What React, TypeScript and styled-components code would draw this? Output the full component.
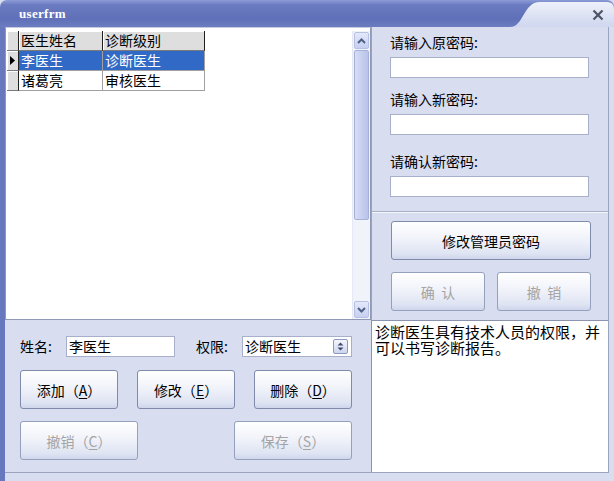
import React from 'react';
import styled, { createGlobalStyle } from 'styled-components';

const GlobalStyle = createGlobalStyle`
  html, body {
    margin: 0;
    padding: 0;
    background: #ffffff;
  }
  body {
    font-family: "Noto Sans CJK SC", "Liberation Sans", sans-serif;
    font-size: 14px;
    color: #000;
  }
`;

const Window = styled.div`
  width: 614px;
  height: 481px;
  display: flex;
  flex-direction: column;
  background: #d8ddf0;
  overflow: hidden;
`;

const TitleBar = styled.div`
  position: relative;
  height: 27px;
  flex-shrink: 0;
  display: flex;
  align-items: center;
  padding-left: 19px;
  border-radius: 7px 7px 0 0;
  background: linear-gradient(#8d9cd6 0%, #6a7bc1 18%, #5f70b8 70%, #6c7cc0 100%);
`;

const Title = styled.span`
  position: relative;
  z-index: 1;
  color: #ffffff;
  font-family: "Liberation Serif", serif;
  font-weight: bold;
  font-size: 13px;
  letter-spacing: 0.3px;
`;

const Swoop = styled.svg`
  position: absolute;
  right: 0;
  top: 0;
`;

const CloseIcon = styled.svg`
  position: absolute;
  right: 10px;
  top: 9px;
`;

const Frame = styled.div`
  flex: 1;
  display: flex;
  border-left: 5px solid #6878be;
  padding: 0 5px 8px 0;
`;

const Client = styled.div`
  flex: 1;
  display: grid;
  grid-template-columns: 366px 1fr;
  grid-template-rows: 293px 1fr;
  border-right: 1px solid #9aa2bd;
  border-bottom: 1px solid #9aa2bd;
`;

const GridPanel = styled.div`
  display: flex;
  background: #ffffff;
  border: 1px solid #8f98b6;
  border-top-color: #c4cae0;
  padding: 3px 0 0 1px;
`;

const Table = styled.div`
  flex: 1;
  display: grid;
  grid-template-columns: 12px 84px 102px;
  grid-auto-rows: 20px;
  align-content: start;
`;

const HeadCell = styled.div`
  background: #dedede;
  border-right: 1px solid #202020;
  border-bottom: 1px solid #7a7a7a;
  box-shadow: inset 1px 1px 0 #ffffff;
  padding-left: 2px;
  line-height: 19px;
  white-space: nowrap;
`;

const MarkerCell = styled.div`
  display: flex;
  align-items: center;
  justify-content: center;
  background: #dedede;
  border-right: 1px solid #202020;
  border-bottom: 1px solid #7a7a7a;
  box-shadow: inset 1px 1px 0 #ffffff;
`;

const Cell = styled.div<{ $selected?: boolean }>`
  background: ${(p) => (p.$selected ? '#3169c6' : '#ffffff')};
  color: ${(p) => (p.$selected ? '#ffffff' : '#000000')};
  border-right: 1px solid #a0a0a0;
  border-bottom: 1px solid #a0a0a0;
  padding-left: 2px;
  line-height: 19px;
  white-space: nowrap;
`;

const ScrollBar = styled.div`
  width: 17px;
  display: flex;
  flex-direction: column;
  background: #f1f3fa;
  border-left: 1px solid #e6e9f5;
`;

const ScrollButton = styled.div`
  height: 15px;
  margin: 1px;
  display: flex;
  align-items: center;
  justify-content: center;
  border: 1px solid #b7c1e4;
  border-radius: 2px;
  background: linear-gradient(#e4e9fa, #c6cff0);
`;

const Thumb = styled.div`
  height: 168px;
  margin: 0 1px;
  border: 1px solid #a6b1d8;
  border-radius: 2px;
  background: linear-gradient(90deg, #d6ddf6, #c4cdef 60%, #b9c3ea);
`;

const Spacer = styled.div`
  flex: 1;
`;

const RightTop = styled.div`
  display: flex;
  flex-direction: column;
  border-left: 1px solid #9aa2bd;
`;

const PasswordSection = styled.div`
  height: 185px;
  padding: 7px 19px 0 18px;
  border-bottom: 1px solid #a8afc7;
  box-shadow: 0 1px 0 #f4f6fc;
  box-sizing: border-box;
  display: flex;
  flex-direction: column;
`;

const FieldLabel = styled.div<{ $gap: number }>`
  margin-top: ${(p) => p.$gap}px;
  height: 16px;
  line-height: 16px;
  margin-bottom: 7px;
`;

const TextBox = styled.div<{ $width?: number }>`
  width: ${(p) => (p.$width ? `${p.$width}px` : 'auto')};
  height: 21px;
  box-sizing: border-box;
  background: #ffffff;
  border: 1px solid #a7afcb;
  padding-left: 2px;
  line-height: 19px;
  white-space: nowrap;
`;

const ButtonSection = styled.div`
  padding: 9px 17px 0 19px;
  display: flex;
  flex-direction: column;
  gap: 12px;
`;

const ButtonRow = styled.div`
  display: flex;
  justify-content: space-between;
`;

const Button = styled.div<{ $width?: number; $disabled?: boolean }>`
  width: ${(p) => (p.$width ? `${p.$width}px` : '100%')};
  height: 39px;
  box-sizing: border-box;
  display: flex;
  align-items: center;
  justify-content: center;
  border: 1px solid ${(p) => (p.$disabled ? '#95a0bd' : '#7f8baa')};
  border-radius: 3px;
  background: linear-gradient(#ffffff 0%, #f1f3fa 45%, #dfe4f3 85%, #cfd6ec 100%);
  color: ${(p) => (p.$disabled ? '#a4a4a4' : '#000000')};
  white-space: nowrap;
`;

const Key = styled.u`
  text-underline-offset: 2px;
`;

const BottomLeft = styled.div`
  padding: 15px 19px 0 15px;
  display: flex;
  flex-direction: column;
`;

const FormRow = styled.div`
  display: flex;
  align-items: center;
  height: 22px;
  margin-bottom: 13px;
`;

const InlineLabel = styled.span<{ $gap?: number }>`
  margin-left: ${(p) => p.$gap ?? 0}px;
  width: 46px;
`;

const Select = styled(TextBox)`
  display: flex;
  align-items: center;
  justify-content: space-between;
  padding-right: 3px;
`;

const SpinBox = styled.div`
  width: 13px;
  height: 13px;
  display: flex;
  align-items: center;
  justify-content: center;
  border: 1px solid #8c98c0;
  border-radius: 2px;
  background: linear-gradient(#f4f6fd, #cdd5f0);
`;

const ButtonGrid = styled.div`
  display: flex;
  flex-direction: column;
  gap: 12px;
`;

const Memo = styled.div`
  background: #ffffff;
  border-top: 1px solid #8b93ad;
  border-left: 1px solid #8b93ad;
  padding: 3px 3px;
  font-size: 15px;
  line-height: 16px;
`;

const rows = [
  { name: '李医生', level: '诊断医生', selected: true },
  { name: '诸葛亮', level: '审核医生', selected: false },
];

const Chevron = ({ up }: { up?: boolean }) => (
  <svg width="9" height="6" viewBox="0 0 9 6">
    <polyline
      points={up ? '1,5 4.5,1.5 8,5' : '1,1 4.5,4.5 8,1'}
      fill="none"
      stroke="#4d6185"
      strokeWidth="2"
    />
  </svg>
);

export default function App() {
  return (
    <>
      <GlobalStyle />
      <Window>
        <TitleBar>
          <Title>userfrm</Title>
          <Swoop width="104" height="27" viewBox="0 0 104 27">
            <defs>
              <linearGradient id="sw" x1="0" y1="0" x2="0" y2="1">
                <stop offset="0" stopColor="#eef1fa" />
                <stop offset="1" stopColor="#cfd6ee" />
              </linearGradient>
            </defs>
            <path d="M0 27 C14 27 13 2 30 2 L97 2 Q104 2 104 9 L104 27 Z" fill="url(#sw)" />
          </Swoop>
          <CloseIcon width="12" height="12" viewBox="0 0 12 12">
            <path d="M1.5 1.5 L10.5 10.5 M10.5 1.5 L1.5 10.5" stroke="#4e5468" strokeWidth="2.2" />
          </CloseIcon>
        </TitleBar>
        <Frame>
          <Client>
            <GridPanel>
              <Table>
                <MarkerCell />
                <HeadCell>医生姓名</HeadCell>
                <HeadCell>诊断级别</HeadCell>
                {rows.map((r) => (
                  <React.Fragment key={r.name}>
                    <MarkerCell>
                      {r.selected ? (
                        <svg width="5" height="9" viewBox="0 0 5 9">
                          <path d="M0 0 L5 4.5 L0 9 Z" fill="#000" />
                        </svg>
                      ) : null}
                    </MarkerCell>
                    <Cell $selected={r.selected}>{r.name}</Cell>
                    <Cell $selected={r.selected}>{r.level}</Cell>
                  </React.Fragment>
                ))}
              </Table>
              <ScrollBar>
                <ScrollButton>
                  <Chevron up />
                </ScrollButton>
                <Thumb />
                <Spacer />
                <ScrollButton>
                  <Chevron />
                </ScrollButton>
              </ScrollBar>
            </GridPanel>

            <RightTop>
              <PasswordSection>
                <FieldLabel $gap={0}>请输入原密码:</FieldLabel>
                <TextBox $width={199} />
                <FieldLabel $gap={13}>请输入新密码:</FieldLabel>
                <TextBox $width={199} />
                <FieldLabel $gap={18}>请确认新密码:</FieldLabel>
                <TextBox $width={199} />
              </PasswordSection>
              <ButtonSection>
                <Button>修改管理员密码</Button>
                <ButtonRow>
                  <Button $width={94} $disabled>
                    确&nbsp;&nbsp;认
                  </Button>
                  <Button $width={94} $disabled>
                    撤&nbsp;&nbsp;销
                  </Button>
                </ButtonRow>
              </ButtonSection>
            </RightTop>

            <BottomLeft>
              <FormRow>
                <InlineLabel>姓名:</InlineLabel>
                <TextBox $width={109}>李医生</TextBox>
                <InlineLabel $gap={21}>权限:</InlineLabel>
                <Select $width={110}>
                  <span>诊断医生</span>
                  <SpinBox>
                    <svg width="7" height="9" viewBox="0 0 7 9">
                      <path d="M3.5 0.5 L6.5 3.5 L0.5 3.5 Z M0.5 5.5 L6.5 5.5 L3.5 8.5 Z" fill="#3f4a6b" />
                    </svg>
                  </SpinBox>
                </Select>
              </FormRow>
              <ButtonGrid>
                <ButtonRow>
                  <Button $width={98}>
                    添加（<Key>A</Key>）
                  </Button>
                  <Button $width={98}>
                    修改（<Key>E</Key>）
                  </Button>
                  <Button $width={98}>
                    删除（<Key>D</Key>）
                  </Button>
                </ButtonRow>
                <ButtonRow>
                  <Button $width={118} $disabled>
                    撤销（<Key>C</Key>）
                  </Button>
                  <Button $width={118} $disabled>
                    保存（<Key>S</Key>）
                  </Button>
                </ButtonRow>
              </ButtonGrid>
            </BottomLeft>

            <Memo>诊断医生具有技术人员的权限，并可以书写诊断报告。</Memo>
          </Client>
        </Frame>
      </Window>
    </>
  );
}
